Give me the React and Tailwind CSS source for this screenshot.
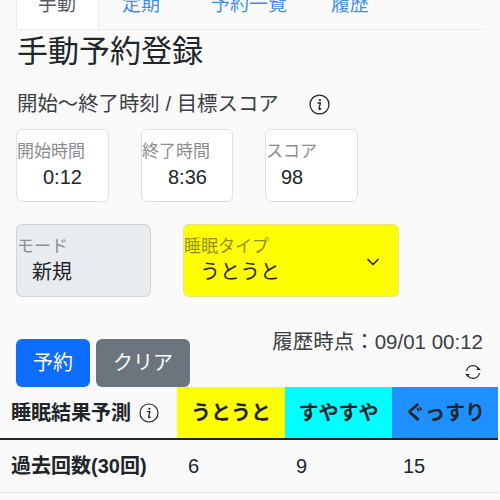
import React from "react";
import { ChevronDown } from "lucide-react";

const InfoIcon = ({ size = 20 }) => (
  <svg width={size} height={size} viewBox="0 0 20 20" fill="none" stroke="#212529">
    <circle cx="10" cy="10" r="9" strokeWidth="1.2" />
    <circle cx="10.4" cy="5.8" r="1.1" fill="#212529" stroke="none" />
    <path d="M8.6 8.6h2.2l-1.2 5.4c-.1.6.5.7 1.6.1" strokeWidth="1.3" strokeLinecap="round" />
  </svg>
);

const RefreshIcon = () => (
  <svg width="18" height="18" viewBox="0 0 18 18" fill="none" stroke="#212529" strokeWidth="1.2">
    <path d="M2.6 8A6.5 6.5 0 0 1 14.2 5.2" />
    <path d="M15.4 10A6.5 6.5 0 0 1 3.8 12.8" />
    <path d="M12.2 7h4.6l-2.3-2.8z" fill="#212529" stroke="none" />
    <path d="M5.8 11H1.2l2.3 2.8z" fill="#212529" stroke="none" />
  </svg>
);

const Field = ({ label, value, width }) => (
  <div className={`${width} h-[73px] bg-white border border-[#dee2e6] rounded-md pt-[12px]`}>
    <div className="text-[17px] leading-[20px] text-[#8a8d90]">{label}</div>
    <div className="text-[20px] leading-[30px] text-[#212529]">{value}</div>
  </div>
);

export default function App() {
  return (
    <div className="w-[500px] h-[500px] overflow-hidden bg-[#fafafa] text-[#212529] font-['Liberation_Sans','Noto_Sans_CJK_JP',sans-serif]">
      {/* Tabs */}
      <div className="mx-4 -mt-2 h-[38px] flex border-b border-[#e9ecef] text-[19px] leading-[26px] text-[#3f8ee8]">
        <div className="w-[83px] h-[37px] bg-white border-x border-[#e9ecef] pl-[21px] text-[#595c5f]">手動</div>
        <div className="pl-[23px] w-[112px]">定期</div>
        <div className="w-[120px]">予約一覧</div>
        <div>履歴</div>
      </div>

      <h1 className="ml-[17px] mt-[2px] text-[31px] leading-[40px] font-normal text-[#212529]">手動予約登録</h1>

      <div className="ml-[17px] mt-[17px] h-[30px] flex items-center text-[20.4px] text-[#3c4043]">
        <span className="w-[292px] whitespace-nowrap">開始～終了時刻 / 目標スコア</span>
        <InfoIcon size={21} />
      </div>

      <div className="mt-[10px] ml-4 flex gap-8">
        <Field label="開始時間" width="w-[93px]" value={<span className="ml-[26px]">0:12</span>} />
        <Field label="終了時間" width="w-[92px]" value={<span className="ml-[26px]">8:36</span>} />
        <Field label="スコア" width="w-[93px]" value={<span className="ml-[15px]">98</span>} />
      </div>

      <div className="mt-[22px] ml-4 flex gap-8">
        <div className="w-[135px] h-[73px] bg-[#e9ecef] border border-[#ced4da] rounded-md pt-[12px]">
          <div className="text-[17px] leading-[20px] text-[#8a8d90]">モード</div>
          <div className="ml-[15px] text-[20px] leading-[30px]">新規</div>
        </div>
        <div className="w-[216px] h-[73px] bg-[#ffff00] border border-[#e6e67a] rounded-md pt-[12px] flex justify-between">
          <div>
            <div className="text-[17px] leading-[20px] text-[#8f8f1a]">睡眠タイプ</div>
            <div className="ml-[16px] text-[20px] leading-[30px]">うとうと</div>
          </div>
          <ChevronDown size={20} strokeWidth={2} className="mt-[15px] mr-[15px]" />
        </div>
      </div>

      <div className="mt-[29px] flex justify-between">
        <div className="ml-4 mt-[13px] flex gap-[6px] text-[20px]">
          <div className="w-[74px] h-[48px] rounded-md bg-[#0d6efd] text-white flex items-center justify-center">予約</div>
          <div className="w-[94px] h-[48px] rounded-md bg-[#6c757d] text-white flex items-center justify-center">クリア</div>
        </div>
        <div className="mr-[17px] mt-px flex flex-col items-end">
          <div className="text-[20.5px] leading-[30px] text-[#3c4043] whitespace-nowrap">履歴時点：09/01 00:12</div>
          <div className="mt-[6px] mr-px"><RefreshIcon /></div>
        </div>
      </div>

      <div className="w-[498px] grid grid-cols-[177px_108px_107px_106px]">
        <div className="h-[53px] border-b-2 border-[#212529] pl-[11px] flex items-center gap-[8px] text-[20px] font-bold whitespace-nowrap">
          睡眠結果予測
          <InfoIcon size={20} />
        </div>
        <div className="h-[53px] border-b-2 border-[#212529] bg-[#ffff00] flex items-center justify-center text-[20px] font-bold">うとうと</div>
        <div className="h-[53px] border-b-2 border-[#212529] bg-[#00ffff] flex items-center justify-center text-[20px] font-bold">すやすや</div>
        <div className="h-[53px] border-b-2 border-[#212529] bg-[#1e90ff] flex items-center justify-center text-[20px] font-bold">ぐっすり</div>

        <div className="h-[53px] border-b border-[#dee2e6] pl-[11px] flex items-center text-[20px] font-bold whitespace-nowrap">過去回数(30回)</div>
        <div className="h-[53px] border-b border-[#dee2e6] pl-[11px] flex items-center text-[20px]">6</div>
        <div className="h-[53px] border-b border-[#dee2e6] pl-[11px] flex items-center text-[20px]">9</div>
        <div className="h-[53px] border-b border-[#dee2e6] flex items-center text-[20px] pl-[11px]">15</div>
      </div>
    </div>
  );
}
